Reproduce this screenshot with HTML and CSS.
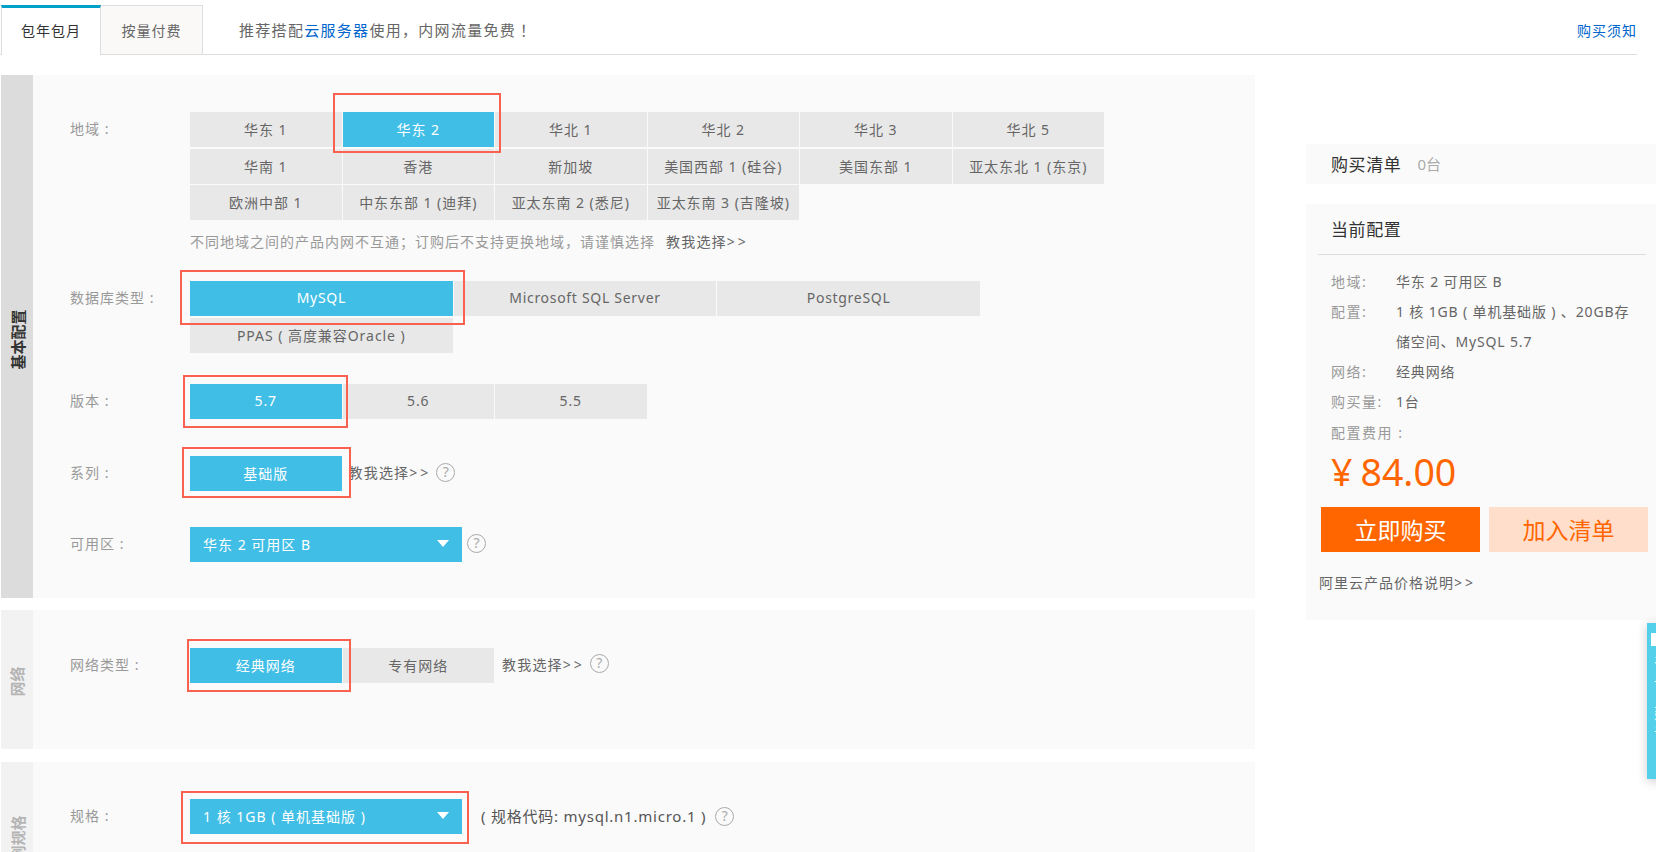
FILE: index.html
```html
<!DOCTYPE html>
<html lang="zh-CN">
<head>
<meta charset="utf-8">
<title>购买</title>
<link rel="stylesheet" href="styles.css">
</head>
<body>
<header class="tabbar">
  <div class="tab tab-active">包年包月</div>
  <div class="tab">按量付费</div>
  <p class="promo">推荐搭配<a class="blue" href="#">云服务器</a>使用，内网流量免费<span class="bang">！</span></p>
  <a class="notice" href="#">购买须知</a>
</header>

<main class="layout">
  <div class="left">
    <section class="section sec-basic">
      <div class="side side-dark"><span>基本配置</span></div>
      <div class="body">
        <div class="row">
          <div class="label">地域 :</div>
          <div>
            <div class="grid six">
              <div class="opt">华东 1</div><div class="opt on">华东 2</div><div class="opt">华北 1</div><div class="opt">华北 2</div><div class="opt">华北 3</div><div class="opt">华北 5</div>
              <div class="opt">华南 1</div><div class="opt">香港</div><div class="opt">新加坡</div><div class="opt">美国西部 1 (硅谷)</div><div class="opt">美国东部 1</div><div class="opt">亚太东北 1 (东京)</div>
              <div class="opt">欧洲中部 1</div><div class="opt">中东东部 1 (迪拜)</div><div class="opt">亚太东南 2 (悉尼)</div><div class="opt">亚太东南 3 (吉隆坡)</div>
            </div>
            <p class="note">不同地域之间的产品内网不互通；订购后不支持更换地域，请谨慎选择<a class="teach note-link" href="#">教我选择<span class="gt">&gt;&gt;</span></a></p>
          </div>
        </div>
        <div class="row row-db">
          <div class="label">数据库类型 :</div>
          <div class="grid three">
            <div class="opt opt-latin on">MySQL</div><div class="opt opt-latin">Microsoft SQL Server</div><div class="opt opt-latin">PostgreSQL</div>
            <div class="opt">PPAS ( 高度兼容Oracle )</div>
          </div>
        </div>
        <div class="row row-ver">
          <div class="label">版本 :</div>
          <div class="grid six">
            <div class="opt on">5.7</div><div class="opt">5.6</div><div class="opt">5.5</div>
          </div>
        </div>
        <div class="row row-series">
          <div class="label">系列 :</div>
          <div class="opt opt-fixed on">基础版</div>
          <a class="teach teach-series" href="#">教我选择<span class="gt">&gt;&gt;</span></a>
          <span class="help">?</span>
        </div>
        <div class="row row-az">
          <div class="label">可用区 :</div>
          <div class="select"><span>华东 2 可用区 B</span><i class="caret"></i></div>
          <span class="help help-az">?</span>
        </div>
      </div>
    </section>

    <section class="section sec-net">
      <div class="side side-net"><span>网络</span></div>
      <div class="body">
        <div class="row">
          <div class="label">网络类型 :</div>
          <div class="opt opt-fixed on">经典网络</div>
          <div class="opt opt-fixed opt-second">专有网络</div>
          <a class="teach teach-net" href="#">教我选择<span class="gt">&gt;&gt;</span></a>
          <span class="help help-net">?</span>
        </div>
      </div>
    </section>

    <section class="section sec-spec">
      <div class="side"><span>实例规格</span></div>
      <div class="body">
        <div class="row">
          <div class="label">规格 :</div>
          <div class="select"><span>1 核 1GB ( 单机基础版 )</span><i class="caret"></i></div>
          <span class="code">( 规格代码: mysql.n1.micro.1 )</span>
          <span class="help help-code">?</span>
        </div>
      </div>
    </section>
  </div>

  <aside class="right">
    <div class="cart"><span class="cart-title">购买清单</span><span class="cart-count">0台</span></div>
    <div class="summary">
      <h2 class="summary-title">当前配置</h2>
      <dl class="specs">
        <dt>地域:</dt><dd>华东 2 可用区 B</dd>
        <dt>配置:</dt><dd>1 核 1GB ( 单机基础版 ) 、20GB存<br>储空间、MySQL 5.7</dd>
        <dt>网络:</dt><dd>经典网络</dd>
        <dt>购买量:</dt><dd>1台</dd>
      </dl>
      <div class="fee">配置费用 :</div>
      <div class="price"><span class="yen">¥</span>84.00</div>
      <div class="actions">
        <button class="btn btn-buy">立即购买</button>
        <button class="btn btn-add">加入清单</button>
      </div>
      <a class="price-link" href="#">阿里云产品价格说明<span class="gt">&gt;&gt;</span></a>
    </div>
  </aside>
</main>

<div class="mark mark-region"></div>
<div class="mark mark-db"></div>
<div class="mark mark-ver"></div>
<div class="mark mark-series"></div>
<div class="mark mark-net"></div>
<div class="mark mark-spec"></div>

<div class="float-tab"><b class="float-icon"></b><span>咨询</span><span>建议</span></div>
</body>
</html>
```

FILE: styles.css
```css
* { box-sizing: border-box; }
html, body { height: 852px; overflow: hidden; }
body {
  margin: 0;
  padding-top: 5px;
  position: relative;
  background: #fff;
  color: #666;
  font-family: "Noto Sans", "Noto Sans CJK SC", sans-serif;
  font-size: 15px;
}
a { text-decoration: none; color: inherit; }
p, h2, dl, dd { margin: 0; }

/* Tabs */
.tabbar {
  display: flex;
  align-items: stretch;
  width: 1637px;
  height: 50px;
  padding-left: 1px;
  border-bottom: 1px solid #ddd;
}
.tab {
  width: 102px;
  height: 50px;
  border: 1px solid #ddd;
  border-left: 0;
  background: #fbf9f8;
  display: flex;
  align-items: center;
  justify-content: center;
  font-size: 14px;
  letter-spacing: 1px;
  color: #666;
}
.tab-active {
  width: 100px;
  padding-bottom: 4px;
  border-top: 3px solid #00a0c8;
  border-left: 1px solid #ddd;
  border-right: 1px solid #ddd;
  border-bottom: 0;
  background: #fff;
  color: #333;
}
.promo {
  margin-left: 36px;
  align-self: center;
  font-size: 15px;
  letter-spacing: 1.3px;
  line-height: 50px;
  color: #666;
}
.bang { padding-left: 4px; }
.blue { color: #06c; }
.notice {
  margin-left: auto;
  align-self: center;
  font-size: 14px;
  letter-spacing: 1px;
  color: #06c;
}

/* Layout */
.layout { display: flex; padding-left: 1px; }
.left { width: 1254px; margin-top: 20px; flex: none; }
.right { width: 350px; margin-left: 51px; margin-top: 89px; flex: none; }

.section { display: flex; background: #fafafa; margin-bottom: 12px; }
.sec-basic { height: 523px; }
.sec-net { height: 139px; margin-bottom: 13px; }
.sec-spec { height: 166px; }

.side {
  width: 32px;
  flex: none;
  background: #f2f2f2;
  display: flex;
  align-items: center;
  justify-content: center;
  color: #b5b5b5;
  font-weight: 700;
  font-size: 15px;
  padding-right: 1px;
}
.side span { flex: none; white-space: nowrap; transform: rotate(-90deg); }
.side-dark { background: #dcdcdc; color: #333; padding-top: 6px; }
.side-net { padding-top: 4px; }

.body { flex: 1; padding: 37px 0 0 37px; }
.sec-net .body { padding-top: 38px; }
.row { display: flex; align-items: flex-start; }
.label { width: 120px; flex: none; line-height: 33px; color: #999; font-size: 14px; letter-spacing: 1px; }

/* Option grids */
.grid { display: grid; column-gap: 1px; row-gap: 1px; grid-template-rows: 36px; grid-auto-rows: 35px; }
.six { grid-template-columns: repeat(6, 151.5px); }
.three { grid-template-columns: repeat(3, 262.67px); }
.opt {
  height: 35px;
  padding-bottom: 2px;
  background: #e8e8e8;
  color: #666;
  display: flex;
  align-items: center;
  justify-content: center;
  font-size: 14px;
  letter-spacing: .95px;
  white-space: nowrap;
}
.opt-latin { letter-spacing: .7px; }
.opt.on { background: #41bee5; color: #fff; }
.opt-fixed { width: 151.5px; flex: none; }
.opt-second { margin-left: 1px; }

.note { margin-top: 12px; line-height: 20px; font-size: 14px; letter-spacing: 1px; color: #999; white-space: nowrap; }
.teach { font-size: 14px; color: #666; line-height: 33px; white-space: nowrap; letter-spacing: 1.2px; }
.gt { letter-spacing: 3px; }
.note-link { margin-left: 11px; line-height: 20px; }
.teach-series { margin-left: 7px; }
.teach-net { margin-left: 8px; }

.row-db { margin-top: 29px; }
.row-ver { margin-top: 31px; }
.row-series { margin-top: 36px; }
.row-az { margin-top: 36px; }

.select {
  width: 272px;
  height: 35px;
  flex: none;
  background: #41bee5;
  color: #fff;
  display: flex;
  align-items: center;
  justify-content: space-between;
  padding: 0 13px 2px;
  font-size: 14px;
  letter-spacing: 1px;
}
.caret {
  width: 0;
  height: 0;
  border-left: 6px solid transparent;
  border-right: 6px solid transparent;
  border-top: 7px solid #fff;
}
.code { margin-left: 19px; line-height: 34px; font-size: 15px; color: #555; white-space: nowrap; letter-spacing: .77px; }

.help {
  width: 19px;
  height: 19px;
  flex: none;
  margin: 7px 0 0 5px;
  border: 1.5px solid #aaa;
  border-radius: 50%;
  color: #aaa;
  font-size: 14px;
  line-height: 16px;
  text-align: center;
}
.help-az { margin-left: 5px; }
.help-net { margin-top: 6px; margin-left: 5px; }
.help-code { margin-left: 9px; margin-top: 8px; }

/* Right column */
.cart { height: 40px; background: #fafafa; display: flex; align-items: center; padding: 0 0 2px 25px; }
.cart-title { font-size: 17px; letter-spacing: .6px; color: #333; }
.cart-count { margin-left: 16px; font-size: 15px; color: #aaa; }
.summary { height: 416px; margin-top: 20px; background: #fafafa; padding-left: 12px; }
.summary-title {
  width: 328px;
  height: 51px;
  padding-left: 13px;
  border-bottom: 1px solid #ddd;
  font-size: 17px;
  font-weight: 400;
  letter-spacing: .6px;
  color: #333;
  line-height: 51px;
}
.specs { display: grid; grid-template-columns: 65px 1fr; margin: 12px 0 0 13px; line-height: 30px; font-size: 14px; white-space: nowrap; }
.specs dt { color: #999; letter-spacing: 1.5px; }
.specs dd { color: #666; letter-spacing: .85px; }
.fee { margin: 6px 0 0 13px; line-height: 20px; font-size: 14px; letter-spacing: 1.5px; color: #999; }
.price { margin: 4px 0 1px 13px; height: 50px; line-height: 50px; font-size: 37.5px; color: #f60; }
.yen { margin-right: 8px; }
.actions { display: flex; gap: 9px; margin: 10px 0 0 3px; }
.btn {
  width: 159px;
  height: 45px;
  border: 0;
  padding: 0 0 1px;
  font-family: inherit;
  font-size: 23px;
  cursor: pointer;
}
.btn-buy { background: #f60; color: #fff; }
.btn-add { background: #ffdfcc; color: #f60; }
.price-link { display: block; margin: 21px 0 0 1px; line-height: 20px; font-size: 14px; letter-spacing: 1px; color: #666; }

/* Red annotation frames over the form */
.mark { position: absolute; border: 2px solid #fb6151; pointer-events: none; }
.mark-region { left: 333px; top: 93px; width: 168px; height: 60px; }
.mark-db { left: 180px; top: 270px; width: 285px; height: 55px; }
.mark-ver { left: 183px; top: 375px; width: 165px; height: 53px; }
.mark-series { left: 182px; top: 447px; width: 169px; height: 51px; }
.mark-net { left: 187px; top: 639px; width: 164px; height: 53px; }
.mark-spec { left: 181px; top: 791px; width: 288px; height: 53px; }

/* Floating feedback tab, cut off by the window edge */
.float-tab {
  position: absolute;
  left: 1647px;
  top: 623px;
  width: 40px;
  height: 156px;
  background: #55d0ea;
  box-shadow: 0 2px 10px rgba(0,0,0,.2);
  padding: 10px 0 0 4px;
  color: #fff;
  font-size: 14px;
  line-height: 18px;
  display: flex;
  flex-direction: column;
  align-items: flex-start;
  gap: 10px;
}
.float-tab span { writing-mode: vertical-rl; letter-spacing: 6px; }
.float-icon { width: 14px; height: 13px; background: #fff; flex: none; }
```
